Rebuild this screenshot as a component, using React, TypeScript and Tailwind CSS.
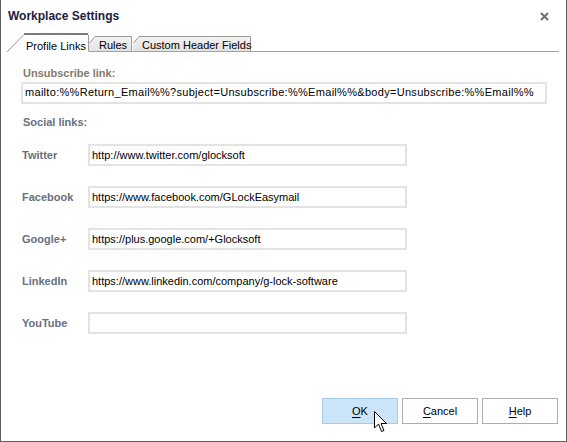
import React from "react";

const font = { fontFamily: '"Liberation Sans", Arial, sans-serif' };

function Field({ value, width, extra = "" }: { value: string; width: string; extra?: string }) {
  return (
    <div
      className={`h-[22px] ${width} border-2 border-[#e3e3e3] bg-white flex items-center pl-[2px] text-[11px] text-black whitespace-nowrap overflow-hidden ${extra}`}
    >
      {value}
    </div>
  );
}

function Row({ label, value }: { label: string; value: string }) {
  return (
    <div className="flex items-center h-[22px]">
      <div className="w-[66px] text-[11px] font-bold text-[#677080]">{label}</div>
      <Field value={value} width="w-[319px]" />
    </div>
  );
}

function Btn({ u, rest, active }: { u: string; rest: string; active?: boolean }) {
  return (
    <div
      className={`w-[76px] h-[26px] flex items-center justify-center text-[11px] text-black border ${
        active ? "bg-[#cce4f7] border-[#a6cbe9]" : "bg-white border-[#adadad]"
      }`}
    >
      <span>
        <span className="underline underline-offset-2">{u}</span>
        {rest}
      </span>
    </div>
  );
}

export default function App() {
  return (
    <div
      className="relative w-[567px] h-[442px] bg-white border-l border-r border-b border-[#5f5f5f] flex flex-col overflow-hidden"
      style={font}
    >
      {/* Title bar */}
      <div className="h-[31px] flex items-center justify-between pl-[7px] pr-[17px] pt-[1px]">
        <span className="text-[12px] font-bold text-[#1b2140]">Workplace Settings</span>
        <svg width="9" height="9" viewBox="0 0 9 9">
          <path d="M1 1 L8 8 M8 1 L1 8" stroke="#707070" strokeWidth="2" />
        </svg>
      </div>

      {/* Tabs */}
      <div className="mt-[2px] ml-[6px] mr-[7px] h-[19px] flex items-end border-b border-[#a0a0a0]">
        {/* active tab */}
        <div className="relative w-[82px] h-[19px] -mb-px z-10">
          <svg className="absolute inset-0" width="82" height="19" viewBox="0 0 82 19">
            <path d="M0.5 19 L17 2 L81.5 2 L81.5 19 Z" fill="#ffffff" />
            <path d="M0.5 18.5 L17 1.5" stroke="#9a9a9a" strokeWidth="1" fill="none" />
            <path d="M17 1 L81 1" stroke="#7a7a7a" strokeWidth="2" />
            <path d="M81.5 2 L81.5 18" stroke="#9a9a9a" strokeWidth="1" />
          </svg>
          <span className="absolute left-[19px] top-[5px] text-[11px] text-black whitespace-nowrap">Profile Links</span>
        </div>
        {/* Rules */}
        <div className="relative w-[43px] h-[16px]">
          <svg className="absolute inset-0" width="43" height="16" viewBox="0 0 43 16">
            <defs>
              <linearGradient id="tg" x1="0" y1="0" x2="0" y2="1">
                <stop offset="0" stopColor="#f4f4f4" />
                <stop offset="1" stopColor="#e2e2e2" />
              </linearGradient>
            </defs>
            <path d="M0 8 L6 1 L42.5 1 L42.5 16 L0 16 Z" fill="url(#tg)" />
            <path d="M0.5 8 L6 1.5 L42.5 1.5 L42.5 16" stroke="#9a9a9a" fill="none" />
          </svg>
          <span className="absolute left-[10px] top-[2px] text-[11px] text-black whitespace-nowrap">Rules</span>
        </div>
        {/* Custom header */}
        <div className="relative w-[118px] h-[16px] ml-[1px]">
          <svg className="absolute inset-0" width="118" height="16" viewBox="0 0 118 16">
            <defs>
              <linearGradient id="tg2" x1="0" y1="0" x2="0" y2="1">
                <stop offset="0" stopColor="#f4f4f4" />
                <stop offset="1" stopColor="#e2e2e2" />
              </linearGradient>
            </defs>
            <path d="M0 8 L6 1 L117.5 1 L117.5 16 L0 16 Z" fill="url(#tg2)" />
            <path d="M0.5 8 L6 1.5 L117.5 1.5 L117.5 16" stroke="#9a9a9a" fill="none" />
          </svg>
          <span className="absolute left-[9px] top-[2px] text-[11px] text-black whitespace-nowrap">Custom Header Fields</span>
        </div>
      </div>

      {/* Content */}
      <div className="pl-[20px] flex flex-col">
        <div className="mt-[13px] ml-[2px] text-[11px] font-bold text-[#857a6c]">Unsubscribe link:</div>
        <div className="mt-0">
          <Field
            value="mailto:%%Return_Email%%?subject=Unsubscribe:%%Email%%&body=Unsubscribe:%%Email%%"
            width="w-[526px]"
            extra="tracking-[0.3px]"
          />
        </div>
        <div className="mt-[10px] ml-[2px] text-[11px] font-bold text-[#677080]">Social links:</div>
        <div className="mt-[14px] ml-[1px] flex flex-col gap-[20px]">
          <Row label="Twitter" value="http://www.twitter.com/glocksoft" />
          <Row label="Facebook" value="https://www.facebook.com/GLockEasymail" />
          <Row label="Google+" value="https://plus.google.com/+Glocksoft" />
          <Row label="LinkedIn" value="https://www.linkedin.com/company/g-lock-software" />
          <Row label="YouTube" value="" />
        </div>
      </div>

      {/* Buttons */}
      <div className="mt-auto mb-[17px] mr-[8px] flex justify-end gap-[4px]">
        <Btn u="O" rest="K" active />
        <Btn u="C" rest="ancel" />
        <Btn u="H" rest="elp" />
      </div>

      {/* Cursor */}
      <svg
        className="absolute left-[373px] top-[411px]"
        width="14"
        height="22"
        viewBox="0 0 14 22"
      >
        <path
          d="M0.5 0.5 L0.5 17 L4.5 13 L7.5 20.5 L10 19.5 L7 12.5 L12.5 12.5 Z"
          fill="#ffffff"
          stroke="#000000"
          strokeWidth="1"
          strokeLinejoin="miter"
        />
      </svg>
    </div>
  );
}
